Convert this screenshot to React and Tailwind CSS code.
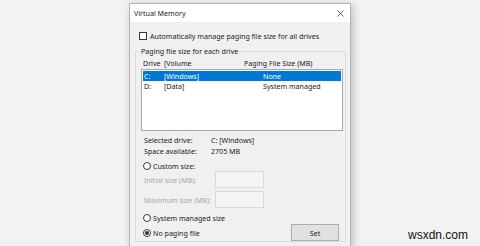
import React from "react";

function Radio({ checked }) {
  return (
    <span className="w-[8px] h-[8px] rounded-full border border-[#3a3a3a] bg-white flex items-center justify-center shrink-0">
      {checked && <span className="w-[4px] h-[4px] rounded-full bg-[#333]" />}
    </span>
  );
}

export default function App() {
  return (
    <div className="relative w-[480px] h-[246px] overflow-hidden bg-[#f2f2f2] text-[7.1px] leading-[10px] text-[#222] font-['Noto_Sans',sans-serif]">
      {/* Dialog */}
      <div className="ml-[129px] mt-[3px] w-[222px] border border-[#b4b4b4] shadow-[2px_2px_8px_rgba(0,0,0,0.22)]">
        {/* Title bar */}
        <div className="h-[18px] bg-white flex items-center justify-between pl-[4px] pr-[6px]">
          <span>Virtual Memory</span>
          <svg width="7" height="7" viewBox="0 0 7 7" className="text-[#444]">
            <path d="M0.5 0.5 L6.5 6.5 M6.5 0.5 L0.5 6.5" stroke="currentColor" strokeWidth="0.8" fill="none" />
          </svg>
        </div>

        {/* Body */}
        <div className="bg-[#f0f0f0] pt-[9px] pb-[20px]">
          <div className="h-[10px] flex items-center pl-[9px] gap-[3px]">
            <span className="w-[8px] h-[8px] border border-[#3a3a3a] bg-white shrink-0" />
            <span>Automatically manage paging file size for all drives</span>
          </div>

          <fieldset className="mt-[5px] ml-[5px] w-[211px] border border-[#dcdcdc]">
            <legend className="ml-[4px] px-[1px] h-[10px]">Paging file size for each drive</legend>

            <div className="mt-[2px] h-[10px] flex pl-[7px]">
              <span className="w-[21px]">Drive</span>
              <span className="w-[80px]">[Volume</span>
              <span>Paging File Size (MB)</span>
            </div>

            <div className="mt-[1px] ml-[5px] w-[202px] h-[62px] border border-[#a9a9a9] bg-white pt-[1px] px-[1px]">
              <div className="h-[10px] flex bg-[#0078d7] text-white pl-[1px]">
                <span className="w-[20px]">C:</span>
                <span className="w-[99px]">[Windows]</span>
                <span>None</span>
              </div>
              <div className="h-[10px] flex pl-[1px]">
                <span className="w-[20px]">D:</span>
                <span className="w-[99px]">[Data]</span>
                <span>System managed</span>
              </div>
            </div>

            <div className="mt-[4px] h-[10px] flex pl-[8px]">
              <span className="w-[67px]">Selected drive:</span>
              <span>C: [Windows]</span>
            </div>
            <div className="mt-[1px] h-[10px] flex pl-[8px]">
              <span className="w-[67px]">Space available:</span>
              <span>2705 MB</span>
            </div>

            <div className="mt-[5px] h-[10px] flex items-center gap-[2px] pl-[7px]">
              <Radio />
              <span>Custom size:</span>
            </div>

            <div className="h-[17px] flex items-center pl-[8px] text-[#a8a8a8]">
              <span className="w-[71px]">Initial size (MB):</span>
              <span className="w-[49px] h-[17px] border border-[#d9d9d9] bg-[#f4f4f4]" />
            </div>
            <div className="mt-[3px] h-[17px] flex items-center pl-[8px] text-[#a8a8a8]">
              <span className="w-[71px]">Maximum size (MB):</span>
              <span className="w-[49px] h-[17px] border border-[#d9d9d9] bg-[#f4f4f4]" />
            </div>

            <div className="mt-[5px] h-[10px] flex items-center gap-[2px] pl-[7px]">
              <Radio />
              <span>System managed size</span>
            </div>

            <div className="mt-[1px] h-[17px] flex items-center justify-between pl-[7px] pr-[6px]">
              <div className="flex items-center gap-[2px]">
                <Radio checked />
                <span>No paging file</span>
              </div>
              <button className="w-[48px] h-[17px] border border-[#adadad] bg-[#e1e1e1] text-[7.1px] leading-[10px] text-[#222]">
                Set
              </button>
            </div>
          </fieldset>
        </div>
      </div>

      {/* Watermark */}
      <span className="absolute right-[12px] bottom-[5px] text-[12px] leading-[12px] text-[#111] font-['Liberation_Sans',Arial,sans-serif]">
        wsxdn.com
      </span>
    </div>
  );
}
